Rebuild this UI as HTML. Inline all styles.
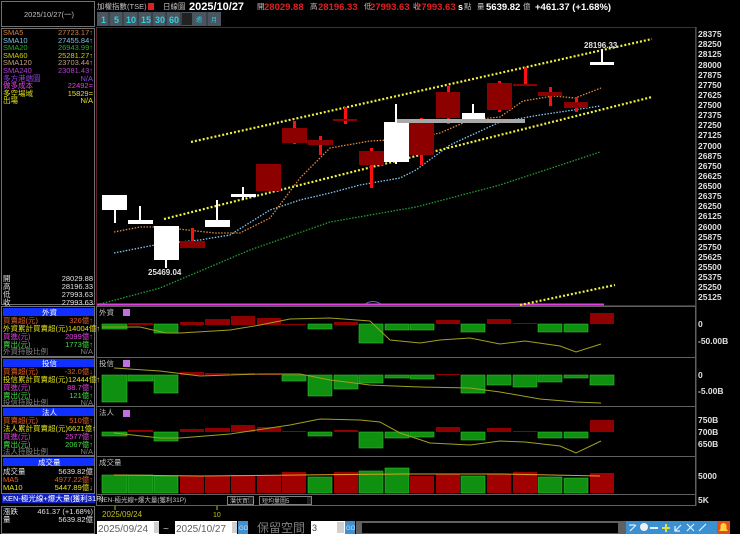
<!DOCTYPE html>
<html><head><meta charset="utf-8"><style>
html,body{margin:0;padding:0;background:#000;width:740px;height:534px;overflow:hidden}
svg{display:block}
text{font-family:"Liberation Sans","Noto Sans CJK TC",sans-serif}
.s{font-size:7.5px}
.ax{font-size:8.5px;fill:#e0e0e0;font-weight:bold}
</style></head><body>
<svg width="740" height="534" viewBox="0 0 740 534" xmlns="http://www.w3.org/2000/svg">
<rect width="740" height="534" fill="#000"/>
<!-- left panel frames -->
<rect x="1.5" y="1.5" width="93" height="25" fill="#000" stroke="#707070"/>
<text x="24" y="17" class="s" fill="#c0c0c0">2025/10/27(一)</text>
<rect x="1.5" y="28.5" width="93" height="276" fill="#000" stroke="#707070"/>
<g class="s">
<text x="3" y="35" fill="#d08040">SMA5</text><text x="93" y="35" fill="#d08040" text-anchor="end">27723.17↑</text>
<text x="3" y="43" fill="#80c0e0">SMA10</text><text x="93" y="43" fill="#80c0e0" text-anchor="end">27455.84↑</text>
<text x="3" y="50" fill="#20b020">SMA20</text><text x="93" y="50" fill="#20b020" text-anchor="end">26943.99↑</text>
<text x="3" y="58" fill="#d0d000">SMA60</text><text x="93" y="58" fill="#d0d000" text-anchor="end">25281.27↑</text>
<text x="3" y="65" fill="#c0a080">SMA120</text><text x="93" y="65" fill="#c0a080" text-anchor="end">23703.44↑</text>
<text x="3" y="73" fill="#b040d0">SMA240</text><text x="93" y="73" fill="#b040d0" text-anchor="end">23081.43↑</text>
<text x="3" y="81" fill="#9040e0">多方港端圖</text><text x="93" y="81" fill="#9040e0" text-anchor="end">N/A</text>
<text x="3" y="88" fill="#e040e0">做多成本</text><text x="93" y="88" fill="#e040e0" text-anchor="end">22492=</text>
<text x="3" y="96" fill="#e0e020">多空場域</text><text x="93" y="96" fill="#e0e020" text-anchor="end">15829=</text>
<text x="3" y="103" fill="#e0e020">出場</text><text x="93" y="103" fill="#e0e020" text-anchor="end">N/A</text>
<text x="3" y="281" fill="#e0e0e0">開</text><text x="93" y="281" fill="#e0e0e0" text-anchor="end">28029.88</text>
<text x="3" y="289" fill="#e0e0e0">高</text><text x="93" y="289" fill="#e0e0e0" text-anchor="end">28196.33</text>
<text x="3" y="297" fill="#e0e0e0">低</text><text x="93" y="297" fill="#e0e0e0" text-anchor="end">27993.63</text>
<text x="3" y="305" fill="#e0e0e0">收</text><text x="93" y="305" fill="#e0e0e0" text-anchor="end">27993.63</text>
</g>
<!-- left sub-sections -->
<rect x="1.5" y="306.5" width="93" height="50" fill="#000" stroke="#707070"/>
<rect x="3" y="308" width="91" height="8" fill="#1030ff"/><text x="42" y="315" class="s" fill="#fff">外資</text>
<rect x="1.5" y="357.5" width="93" height="48" fill="#000" stroke="#707070"/>
<rect x="3" y="359" width="91" height="8" fill="#1030ff"/><text x="42" y="366" class="s" fill="#fff">投信</text>
<rect x="1.5" y="406.5" width="93" height="49" fill="#000" stroke="#707070"/>
<rect x="3" y="408" width="91" height="8" fill="#1030ff"/><text x="42" y="415" class="s" fill="#fff">法人</text>
<rect x="1.5" y="456.5" width="93" height="37" fill="#000" stroke="#707070"/>
<rect x="3" y="458" width="91" height="8" fill="#1030ff"/><text x="38" y="465" class="s" fill="#fff">成交量</text>
<g class="s">
<text x="3" y="323" fill="#e06020">買賣超(元)</text><text x="93" y="323" fill="#e06020" text-anchor="end">326億↑</text>
<text x="3" y="331" fill="#e0e020">外資累計買賣超(元)14004億↑</text>
<text x="3" y="339" fill="#e040e0">買進(元)</text><text x="93" y="339" fill="#e040e0" text-anchor="end">2099億↑</text>
<text x="3" y="347" fill="#40e040">賣出(元)</text><text x="93" y="347" fill="#40e040" text-anchor="end">1773億↑</text>
<text x="3" y="354" fill="#808080">外資持股比例</text><text x="93" y="354" fill="#808080" text-anchor="end">N/A</text>
<text x="3" y="374" fill="#e06020">買賣超(元)</text><text x="93" y="374" fill="#e06020" text-anchor="end">-32.0億↓</text>
<text x="3" y="382" fill="#e0e020">投信累計買賣超(元)12444億↑</text>
<text x="3" y="390" fill="#e040e0">買進(元)</text><text x="93" y="390" fill="#e040e0" text-anchor="end">88.7億↑</text>
<text x="3" y="398" fill="#40e040">賣出(元)</text><text x="93" y="398" fill="#40e040" text-anchor="end">121億↑</text>
<text x="3" y="405" fill="#808080">投信持股比例</text><text x="93" y="405" fill="#808080" text-anchor="end">N/A</text>
<text x="3" y="423" fill="#e06020">買賣超(元)</text><text x="93" y="423" fill="#e06020" text-anchor="end">510億↑</text>
<text x="3" y="431" fill="#e0e020">法人累計買賣超(元)6621億↑</text>
<text x="3" y="439" fill="#e040e0">買進(元)</text><text x="93" y="439" fill="#e040e0" text-anchor="end">2577億↑</text>
<text x="3" y="447" fill="#40e040">賣出(元)</text><text x="93" y="447" fill="#40e040" text-anchor="end">2067億↑</text>
<text x="3" y="454" fill="#808080">法人持股比例</text><text x="93" y="454" fill="#808080" text-anchor="end">N/A</text>
<text x="3" y="474" fill="#e0e0e0">成交量</text><text x="93" y="474" fill="#e0e0e0" text-anchor="end">5639.82億</text>
<text x="3" y="482" fill="#e06020">MA5</text><text x="93" y="482" fill="#e06020" text-anchor="end">4977.22億↑</text>
<text x="3" y="490" fill="#e0e020">MA10</text><text x="93" y="490" fill="#e0e020" text-anchor="end">5447.89億↓</text>
</g>
<rect x="2" y="494" width="93" height="9" fill="#1020c0"/>
<text x="3" y="501" class="s" fill="#fff">KEN-極光線+爆大量(獲利31P)</text>
<rect x="1.5" y="506.5" width="93" height="27" fill="#000" stroke="#707070"/>
<text x="3" y="514" class="s" fill="#e0e0e0">漲跌</text><text x="93" y="514" class="s" fill="#e0e0e0" text-anchor="end">461.37 (+1.68%)</text>
<text x="3" y="522" class="s" fill="#e0e0e0">量</text><text x="93" y="522" class="s" fill="#e0e0e0" text-anchor="end">5639.82億</text>

<!-- header -->
<text x="97" y="9" class="s" fill="#c0c0c0">加權指數(TSE)</text>
<rect x="148" y="3" width="6" height="7" fill="#e02020"/>
<text x="163" y="9" class="s" fill="#c0c0c0">日線圖</text>
<text x="189" y="10" font-size="11" font-weight="bold" fill="#fff">2025/10/27</text>
<text x="257" y="9" class="s" fill="#c0c0c0">開</text><text x="264" y="10" font-size="9.5" font-weight="bold" fill="#e02020">28029.88</text>
<text x="310" y="9" class="s" fill="#c0c0c0">高</text><text x="318" y="10" font-size="9.5" font-weight="bold" fill="#e02020">28196.33</text>
<text x="364" y="9" class="s" fill="#c0c0c0">低</text><text x="370" y="10" font-size="9.5" font-weight="bold" fill="#e02020">27993.63</text>
<text x="413" y="9" class="s" fill="#c0c0c0">收</text><text x="416" y="10" font-size="9.5" font-weight="bold" fill="#e02020">27993.63</text>
<text x="458" y="10" font-size="9" font-weight="bold" fill="#fff">s</text><text x="464" y="9" class="s" fill="#c0c0c0">點</text>
<text x="477" y="9" class="s" fill="#c0c0c0">量</text><text x="486" y="10" font-size="9.5" font-weight="bold" fill="#fff">5639.82</text>
<text x="523" y="9" class="s" fill="#c0c0c0">億</text>
<text x="535" y="10" font-size="9.5" font-weight="bold" fill="#fff">+461.37 (+1.68%)</text>
<!-- period buttons -->
<rect x="97" y="12" width="124" height="14" fill="#4a5560"/>
<g font-size="9" font-weight="bold" fill="#30d0e0">
<text x="101" y="23">1</text><text x="114" y="23">5</text><text x="126" y="23">10</text><text x="141" y="23">15</text><text x="155" y="23">30</text><text x="169" y="23">60</text>
</g>
<rect x="182" y="13" width="10" height="12" fill="#222"/>
<g stroke="#2a3038"><line x1="109" y1="12" x2="109" y2="26"/><line x1="123" y1="12" x2="123" y2="26"/><line x1="138" y1="12" x2="138" y2="26"/><line x1="152" y1="12" x2="152" y2="26"/><line x1="166" y1="12" x2="166" y2="26"/><line x1="181" y1="12" x2="181" y2="26"/><line x1="207" y1="12" x2="207" y2="26"/></g>
<text x="196" y="22" font-size="6" fill="#30d0e0">週</text><text x="211" y="22" font-size="6" fill="#30d0e0">月</text>

<!-- chart frames -->
<rect x="96.5" y="27.5" width="599" height="278" fill="none" stroke="#602030"/>
<rect x="96.5" y="306.5" width="599" height="51" fill="none" stroke="#606060"/>
<rect x="96.5" y="357.5" width="599" height="49" fill="none" stroke="#606060"/>
<rect x="96.5" y="406.5" width="599" height="50" fill="none" stroke="#606060"/>
<rect x="96.5" y="456.5" width="599" height="38" fill="none" stroke="#606060"/>
<rect x="96.5" y="494.5" width="599" height="11" fill="none" stroke="#606060"/>
<line x1="696" y1="27" x2="696" y2="506" stroke="#606060"/>

<!-- price axis -->
<g class="ax">
<text x="698" y="37">28375</text><text x="698" y="47">28250</text><text x="698" y="57">28125</text><text x="698" y="68">28000</text><text x="698" y="78">27875</text><text x="698" y="88">27750</text><text x="698" y="98">27625</text><text x="698" y="108">27500</text><text x="698" y="118">27375</text><text x="698" y="128">27250</text><text x="698" y="138">27125</text><text x="698" y="149">27000</text><text x="698" y="159">26875</text><text x="698" y="169">26750</text><text x="698" y="179">26625</text><text x="698" y="189">26500</text><text x="698" y="199">26375</text><text x="698" y="209">26250</text><text x="698" y="219">26125</text><text x="698" y="230">26000</text><text x="698" y="240">25875</text><text x="698" y="250">25750</text><text x="698" y="260">25625</text><text x="698" y="270">25500</text><text x="698" y="280">25375</text><text x="698" y="290">25250</text><text x="698" y="300">25125</text>
<text x="698" y="327">0</text><text x="698" y="344">-50.00B</text>
<text x="698" y="378">0</text><text x="698" y="394">-5.00B</text>
<text x="698" y="423">750B</text><text x="698" y="435">700B</text><text x="698" y="447">650B</text>
<text x="698" y="479">5000</text><text x="698" y="503">5K</text>
</g>

<!-- MA lines -->
<g fill="none" stroke-width="1.3" stroke-dasharray="1.5 1.5">
<polyline stroke="#20a030" points="100,304 160,288 250,250 330,222 416,207 500,185 600,152"/>
<polyline stroke="#80c8f0" points="114,253 160,244 200,240 230,235 270,210 300,200 330,193 360,185 400,178 416,170 450,145 500,122 540,115 600,106"/>
<polyline stroke="#e08a40" points="114,232 140,227 160,227 215,233 240,233 270,218 300,178 330,148 370,141 410,139 440,133 470,120 500,117 523,101 553,96 575,98 601,88"/>
</g>
<line x1="97" y1="304.5" x2="604" y2="304.5" stroke="#e040e0" stroke-width="2"/>
<path d="M365,304 q8,-5 16,0" stroke="#6060c0" fill="none"/>
<g stroke="#f0f040" stroke-width="2.2" stroke-dasharray="2 2" fill="none">
<line x1="191" y1="142" x2="652" y2="39"/>
<line x1="164" y1="219" x2="652" y2="97"/>
<line x1="520" y1="305" x2="615" y2="285"/>
</g>

<!-- candles -->
<g fill="#ff1010">
<rect x="191" y="228" width="3" height="20"/><rect x="293" y="121" width="3" height="23"/><rect x="319" y="136" width="3" height="19"/>
<rect x="344" y="107" width="3" height="17"/><rect x="370" y="148" width="3" height="40"/><rect x="420" y="118" width="3" height="47"/>
<rect x="447" y="86" width="3" height="38"/><rect x="498" y="81" width="3" height="31"/><rect x="524" y="67" width="3" height="18"/>
<rect x="549" y="87" width="3" height="19"/><rect x="575" y="97" width="3" height="15"/>
</g>
<g fill="#8c0000">
<rect x="180" y="241" width="25" height="7"/><rect x="256" y="164" width="25" height="27"/><rect x="282" y="128" width="25" height="15"/>
<rect x="308" y="140" width="25" height="5"/><rect x="333" y="119" width="24" height="2"/><rect x="359" y="151" width="25" height="14"/>
<rect x="409" y="121" width="25" height="34"/><rect x="436" y="92" width="24" height="26"/><rect x="487" y="83" width="25" height="27"/>
<rect x="513" y="84" width="24" height="2"/><rect x="538" y="92" width="24" height="4"/><rect x="564" y="102" width="24" height="6"/>
</g>
<g fill="#ffffff">
<rect x="114" y="195" width="2" height="28"/><rect x="102" y="195" width="25" height="15"/>
<rect x="139" y="206" width="2" height="16"/><rect x="128" y="220" width="25" height="4"/>
<rect x="165" y="226" width="2" height="42"/><rect x="154" y="226" width="25" height="34"/>
<rect x="216" y="200" width="2" height="20"/><rect x="205" y="220" width="25" height="7"/>
<rect x="242" y="187" width="2" height="13"/><rect x="231" y="194" width="25" height="3"/>
<rect x="395" y="104" width="2" height="60"/><rect x="384" y="122" width="25" height="40"/>
<rect x="472" y="104" width="2" height="10"/><rect x="462" y="113" width="23" height="7"/>
<rect x="601" y="49" width="2" height="14"/><rect x="590" y="62" width="24" height="3"/>
</g>
<rect x="397" y="119" width="128" height="4" fill="#a8a8a8"/>
<text x="148" y="275" font-size="8" font-weight="bold" fill="#e0e0e0">25469.04</text>
<text x="584" y="48" font-size="8" font-weight="bold" fill="#e0e0e0">28196.33</text>

<!-- subpanel labels -->
<g class="s" fill="#c0c0c0"><text x="99" y="315">外資</text><text x="99" y="366">投信</text><text x="99" y="415">法人</text><text x="99" y="465">成交量</text></g>
<g fill="#c070e0"><rect x="123" y="309" width="7" height="7"/><rect x="123" y="360" width="7" height="7"/><rect x="123" y="410" width="7" height="7"/></g>

<!-- 外資 -->
<g fill="#109010" stroke="#30c030" stroke-width=".6">
<rect x="102" y="324" width="25" height="5"/><rect x="154" y="324" width="24" height="9"/><rect x="308" y="324" width="24" height="5"/>
<rect x="359" y="324" width="24" height="19"/><rect x="385" y="324" width="24" height="6"/><rect x="410" y="324" width="24" height="6"/>
<rect x="461" y="324" width="24" height="8"/><rect x="538" y="324" width="24" height="8"/><rect x="564" y="324" width="24" height="8"/>
</g>
<g fill="#900000">
<rect x="128" y="323" width="25" height="2"/><rect x="180" y="322" width="24" height="3"/><rect x="205" y="319" width="25" height="6"/>
<rect x="231" y="316" width="24" height="9"/><rect x="257" y="318" width="24" height="7"/><rect x="282" y="324" width="24" height="1"/>
<rect x="334" y="322" width="24" height="3"/><rect x="436" y="320" width="24" height="4"/><rect x="487" y="319" width="24" height="5"/>
<rect x="513" y="323" width="24" height="1"/><rect x="590" y="313" width="24" height="11"/>
</g>
<polyline fill="none" stroke="#a0a020" stroke-width="1" points="102,327 140,327 166,333 180,333 230,330 260,325 290,319 330,318 370,321 390,340 420,343 440,340 470,338 500,344 525,341 560,346 576,352 601,344"/>
<!-- 投信 -->
<g fill="#109010" stroke="#30c030" stroke-width=".6">
<rect x="102" y="375" width="25" height="27"/><rect x="128" y="375" width="25" height="6"/><rect x="154" y="375" width="24" height="18"/>
<rect x="282" y="375" width="24" height="6"/><rect x="308" y="375" width="24" height="21"/><rect x="334" y="375" width="24" height="14"/>
<rect x="359" y="375" width="24" height="8"/><rect x="385" y="375" width="24" height="3"/><rect x="410" y="375" width="24" height="4"/>
<rect x="461" y="375" width="24" height="18"/><rect x="487" y="375" width="24" height="10"/><rect x="513" y="375" width="24" height="12"/>
<rect x="538" y="375" width="24" height="7"/><rect x="564" y="375" width="24" height="3"/><rect x="590" y="375" width="24" height="10"/>
</g>
<g fill="#900000"><rect x="180" y="372" width="24" height="3"/><rect x="205" y="373" width="25" height="2"/><rect x="231" y="373" width="24" height="2"/><rect x="257" y="374" width="24" height="1"/><rect x="436" y="374" width="24" height="1"/></g>
<polyline fill="none" stroke="#a0a020" stroke-width="1" points="114,368 160,371 200,376 260,374 300,374 330,380 370,385 420,387 470,388 500,392 540,399 576,402 601,403"/>
<!-- 法人 -->
<g fill="#109010" stroke="#30c030" stroke-width=".6">
<rect x="102" y="432" width="25" height="4"/><rect x="154" y="432" width="24" height="9"/><rect x="308" y="432" width="24" height="4"/>
<rect x="359" y="432" width="24" height="16"/><rect x="385" y="432" width="24" height="6"/><rect x="410" y="432" width="24" height="5"/>
<rect x="461" y="432" width="24" height="8"/><rect x="538" y="432" width="24" height="6"/><rect x="564" y="432" width="24" height="6"/>
</g>
<g fill="#900000">
<rect x="128" y="430" width="25" height="2"/><rect x="180" y="429" width="24" height="3"/><rect x="205" y="428" width="25" height="4"/>
<rect x="231" y="425" width="24" height="7"/><rect x="257" y="427" width="24" height="5"/><rect x="282" y="431" width="24" height="1"/>
<rect x="334" y="430" width="24" height="2"/><rect x="436" y="427" width="24" height="5"/><rect x="487" y="428" width="24" height="4"/>
<rect x="513" y="431" width="24" height="1"/><rect x="590" y="420" width="24" height="12"/>
</g>
<polyline fill="none" stroke="#a0a020" stroke-width="1" points="114,433 160,438 180,438 230,434 290,425 320,419 360,420 380,422 400,433 430,443 470,445 500,441 525,442 560,446 576,453 601,441"/>
<!-- volume -->
<g fill="#109010" stroke="#30c030" stroke-width=".6">
<rect x="102" y="475" width="25" height="18"/><rect x="128" y="475" width="25" height="18"/><rect x="154" y="476" width="24" height="17"/>
<rect x="308" y="477" width="24" height="16"/><rect x="359" y="471" width="24" height="22"/><rect x="385" y="468" width="24" height="25"/>
<rect x="461" y="476" width="24" height="17"/><rect x="538" y="477" width="24" height="16"/><rect x="564" y="478" width="24" height="15"/>
</g>
<g fill="#a00000">
<rect x="180" y="476" width="24" height="17"/><rect x="205" y="476" width="25" height="17"/><rect x="231" y="475" width="24" height="18"/>
<rect x="257" y="476" width="24" height="17"/><rect x="282" y="472" width="24" height="21"/><rect x="334" y="472" width="24" height="21"/>
<rect x="410" y="476" width="24" height="17"/><rect x="436" y="474" width="24" height="19"/><rect x="487" y="474" width="24" height="19"/>
<rect x="513" y="472" width="24" height="21"/><rect x="590" y="473" width="24" height="20"/>
</g>
<polyline fill="none" stroke="#e0a020" stroke-width="1" points="114,475 200,476 300,475 400,474 500,474 600,476"/>

<!-- bottom selector row -->
<text x="99" y="502" font-size="6.5" fill="#c0c0c0">KEN-極光線+爆大量(獲利31P)</text>
<rect x="227.5" y="496.5" width="26" height="8" fill="none" stroke="#808080"/><text x="230" y="503" font-size="6" fill="#c0c0c0">潛伏買點</text>
<rect x="259.5" y="496.5" width="52" height="8" fill="none" stroke="#808080"/><text x="262" y="503" font-size="6" fill="#c0c0c0">短均量圖5</text>
<rect x="249" y="497" width="4" height="7" fill="#202020"/><rect x="307" y="497" width="4" height="7" fill="#202020"/>
<line x1="115" y1="506" x2="115" y2="510" stroke="#c0c000"/><line x1="217" y1="506" x2="217" y2="510" stroke="#c0c000"/>
<text x="102" y="517" font-size="8" fill="#c0c020">2025/09/24</text>
<text x="213" y="517" font-size="7" fill="#c0c020">10</text>

<!-- bottom controls -->
<rect x="97" y="521" width="62" height="13" fill="#fff"/><text x="98" y="532" font-size="10" fill="#606060">2025/09/24</text>
<rect x="154" y="522" width="5" height="11" fill="#d0d0d0"/>
<text x="163" y="532" font-size="10" fill="#c0c0c0">~</text>
<rect x="175" y="521" width="62" height="13" fill="#fff"/><text x="176" y="532" font-size="10" fill="#606060">2025/10/27</text>
<rect x="232" y="522" width="5" height="11" fill="#d0d0d0"/>
<rect x="238" y="521" width="10" height="13" fill="#4090d0"/><text x="239" y="530" font-size="6" fill="#c0e0ff">GO</text>
<text x="257" y="532" font-size="12" fill="#808080">保留空間</text>
<rect x="311" y="521" width="34" height="13" fill="#fff"/><text x="312" y="531" font-size="9" fill="#404040">3</text>
<rect x="337" y="522" width="7" height="11" fill="#d0d0d0"/>
<rect x="345" y="521" width="10" height="13" fill="#4090d0"/><text x="346" y="530" font-size="6" fill="#c0e0ff">GO</text>
<rect x="356" y="521" width="270" height="13" fill="#606060"/><rect x="362" y="523" width="256" height="10" fill="#000"/>
<rect x="626" y="521" width="104" height="13" fill="#3a90d0"/>
<g stroke="#e0f0ff" stroke-width="1.2" fill="none">
<path d="M630,531 l6,-6 M630,526 v-1 h5"/><circle cx="644" cy="527" r="4" fill="#f0f0f0" stroke="none"/>
<path d="M650,528 h8" stroke-width="2"/><path d="M662,528 h8 M666,524 v8" stroke="#e0e040" stroke-width="2"/>
<path d="M675,531 l6,-6 M680,531 h-5 v-5"/><path d="M687,524 l7,7 M694,524 l-7,7"/><path d="M699,531 l7,-7"/>
</g>
<rect x="717" y="521" width="13" height="13" fill="#e05010"/><path d="M719,531 h9 l-1.5,-2 v-3 a3,3 0 0 0 -6,0 v3 z" fill="#ffd040"/>
</svg>
</body></html>
